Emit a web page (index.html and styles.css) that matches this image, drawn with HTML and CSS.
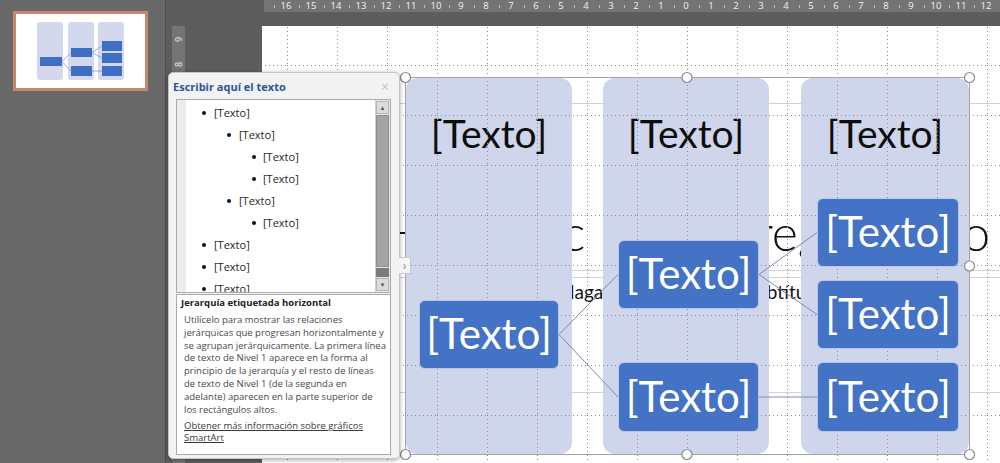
FILE: index.html
```html
<!DOCTYPE html>
<html lang="es">
<head>
<meta charset="utf-8">
<title>SmartArt</title>
<link rel="stylesheet" href="styles.css">
</head>
<body>
<div class="app">
  <aside class="thumbs">
    <div class="thumb">
      <svg class="thumb-art" width="129" height="74" viewBox="0 0 129 74">
        <g fill="#d3d8ec">
          <rect x="21" y="8" width="26" height="58" rx="3"/>
          <rect x="52" y="8" width="26" height="58" rx="3"/>
          <rect x="82" y="8" width="26" height="58" rx="3"/>
        </g>
        <path d="M46 47.5 L55 38.5 M46 47.5 L55 57 M76 38.5 L86 32 M76 38.5 L86 44 M76 57 L86 57" stroke="#8596bb" stroke-width="0.8" fill="none"/>
        <g fill="#3f6fc4">
          <rect x="24" y="43" width="22" height="9"/>
          <rect x="55" y="34" width="21" height="9"/>
          <rect x="55" y="52" width="21" height="10"/>
          <rect x="86" y="27" width="20" height="10"/>
          <rect x="86" y="39" width="20" height="10"/>
          <rect x="86" y="52" width="20" height="10"/>
        </g>
      </svg>
    </div>
  </aside>

  <div class="workspace">
    <div class="hruler">
      <span>16</span><span>15</span><span>14</span><span>13</span><span>12</span><span>11</span><span>10</span><span>9</span><span>8</span><span>7</span><span>6</span><span>5</span><span>4</span><span>3</span><span>2</span><span>1</span><span>0</span><span>1</span><span>2</span><span>3</span><span>4</span><span>5</span><span>6</span><span>7</span><span>8</span><span>9</span><span>10</span><span>11</span><span>12</span>
    </div>
    <div class="vruler">
      <span>9</span><span>8</span><span>7</span><span>6</span><span>5</span>
    </div>
    <div class="slide">
      <div class="ph ph-title"><span>Haga clic para agregar título</span></div>
      <div class="ph ph-sub"><span>Haga clic para agregar subtítulo</span></div>

      <svg class="grid" width="100%" height="100%">
        <defs>
          <pattern id="g" width="50" height="50" patternUnits="userSpaceOnUse" x="25" y="39">
            <line x1="0" y1="0.5" x2="50" y2="0.5" stroke="#8a8a8a" stroke-width="1" stroke-dasharray="1 3"/>
            <line x1="0.5" y1="0" x2="0.5" y2="50" stroke="#8a8a8a" stroke-width="1" stroke-dasharray="1 3"/>
          </pattern>
        </defs>
        <rect width="100%" height="100%" fill="url(#g)"/>
      </svg>

      <div class="smartart">
        <div class="col col-1"><span>[Texto]</span></div>
        <div class="col col-2"><span>[Texto]</span></div>
        <div class="col col-3"><span>[Texto]</span></div>

        <div class="node node-a">[Texto]</div>
        <div class="node node-b">[Texto]</div>
        <div class="node node-c">[Texto]</div>
        <div class="node node-d">[Texto]</div>
        <div class="node node-e">[Texto]</div>
        <div class="node node-f">[Texto]</div>

        <svg class="frame" width="565" height="378" viewBox="0 0 565 378">
          <path class="links" d="M154 257.5 L213 197.5 M154 257.5 L213 320 M354 197.5 L412 155.5 M354 197.5 L412 237.5 M354 320 L412 320"/>
          <rect x="0.5" y="0.5" width="564" height="377" fill="none" stroke="#a3a3a3"/>
          <g class="handles">
            <circle cx="0.5" cy="0.5" r="5"/>
            <circle cx="282" cy="0.5" r="5"/>
            <circle cx="564.5" cy="0.5" r="5"/>
            <circle cx="564.5" cy="189" r="5"/>
            <circle cx="564.5" cy="377.5" r="5"/>
            <circle cx="282" cy="377.5" r="5"/>
            <circle cx="0.5" cy="377.5" r="5"/>
            <circle cx="0.5" cy="189" r="5"/>
          </g>
        </svg>
      </div>
    </div>
  </div>

  <section class="textpane">
    <header class="pane-head">
      <h1 class="pane-title">Escribir aquí el texto</h1>
      <span class="pane-close">×</span>
    </header>
    <div class="listbox">
      <div class="strip"></div>
      <ul class="items">
        <li class="l1">[Texto]</li>
        <li class="l2">[Texto]</li>
        <li class="l3">[Texto]</li>
        <li class="l3">[Texto]</li>
        <li class="l2">[Texto]</li>
        <li class="l3">[Texto]</li>
        <li class="l1">[Texto]</li>
        <li class="l1">[Texto]</li>
        <li class="l1">[Texto]</li>
      </ul>
      <div class="scroll">
        <div class="sbtn">▲</div>
        <div class="sthumb"></div>
        <div class="strack"></div>
        <div class="sbtn">▼</div>
      </div>
    </div>
    <div class="desc">
      <h2 class="desc-title">Jerarquía etiquetada horizontal</h2>
      <p class="desc-body">Utilícelo para mostrar las relaciones<br>jerárquicas que progresan horizontalmente y<br>se agrupan jerárquicamente. La primera línea<br>de texto de Nivel 1 aparece en la forma al<br>principio de la jerarquía y el resto de líneas<br>de texto de Nivel 1 (de la segunda en<br>adelante) aparecen en la parte superior de<br>los rectángulos altos.</p>
      <p class="desc-link"><a>Obtener más información sobre gráficos<br>SmartArt</a></p>
    </div>
  </section>
  <div class="pane-tab">›</div>
</div>
</body>
</html>
```

FILE: styles.css
```css
html, body {
  margin: 0;
  padding: 0;
  width: 1000px;
  height: 463px;
  overflow: hidden;
  background: #5e5e5e;
}

.app {
  position: relative;
  display: flex;
  width: 1000px;
  height: 463px;
  font-family: "Open Sans", "Noto Sans", sans-serif;
}

/* thumbnails pane */
.thumbs {
  width: 166px;
  flex: none;
  background: #686868;
  border-right: 1px solid #4e4e4e;
  padding: 11px 0 0 13px;
  box-sizing: border-box;
}

.thumb {
  width: 135px;
  height: 80px;
  box-sizing: border-box;
  border: 3px solid #c9866f;
  background: #fff;
}

.thumb-art {
  display: block;
}

/* workspace */
.workspace {
  flex: 1;
  display: grid;
  grid-template-columns: 96px 1fr;
  grid-template-rows: 12px 14px 1fr;
  background: #5d5d5d;
  min-width: 0;
}

.hruler {
  grid-column: 2;
  grid-row: 1;
  margin-left: 2px;
  padding-left: 9.5px;
  background: #747474;
  display: flex;
  overflow: hidden;
}

.hruler span {
  position: relative;
  flex: none;
  width: 25px;
  text-align: center;
  font-size: 9.5px;
  line-height: 12px;
  color: #f2f2f2;
}

.hruler span::before {
  content: "";
  position: absolute;
  left: 0;
  top: 5px;
  width: 1px;
  height: 3px;
  background: #bdbdbd;
}

.vruler {
  grid-column: 1;
  grid-row: 3;
  width: 13px;
  margin-left: 6px;
  background: #747474;
  display: flex;
  flex-direction: column;
  padding-top: 1px;
  box-sizing: border-box;
}

.vruler span {
  height: 25px;
  display: flex;
  align-items: center;
  justify-content: center;
  font-size: 9px;
  color: #eeeeee;
  transform: rotate(-90deg);
}

.slide {
  grid-column: 2;
  grid-row: 3;
  position: relative;
  overflow: hidden;
  background: #ffffff;
}

/* placeholders behind SmartArt */
.ph {
  position: absolute;
  left: 64px;
  width: 730px;
  box-sizing: border-box;
  border: 1px solid #d2d2d2;
  display: flex;
  justify-content: center;
  font-family: "Lato", "Open Sans", sans-serif;
  color: #111;
  white-space: nowrap;
}

.ph-title {
  top: 77px;
  height: 168px;
  align-items: flex-end;
  padding-bottom: 13px;
  font-size: 50px;
  font-weight: 300;
  line-height: 1;
}

.ph-sub {
  top: 251px;
  height: 116px;
  align-items: flex-start;
  padding-top: 4px;
  font-size: 19px;
  line-height: 1;
}

.grid {
  position: absolute;
  left: 0;
  top: 0;
  z-index: 2;
  pointer-events: none;
}

/* SmartArt */
.smartart {
  position: absolute;
  left: 143px;
  top: 51px;
  width: 565px;
  height: 378px;
}

.col {
  position: absolute;
  top: 1px;
  height: 376px;
  z-index: 1;
  background: #cfd5ea;
  border-radius: 12px;
  display: flex;
  justify-content: center;
  padding-top: 36px;
  box-sizing: border-box;
  font-family: "Lato", "Open Sans", sans-serif;
  font-size: 39px;
  line-height: 38px;
  color: #0d0d0d;
}

.col-1 { left: 1px; width: 166px; }
.col-2 { left: 198px; width: 166px; }
.col-3 { left: 396px; width: 168px; }

.node {
  position: absolute;
  z-index: 3;
  box-sizing: border-box;
  background: #4472c4;
  border: 1px solid #b7c8ea;
  border-radius: 6px;
  display: flex;
  align-items: center;
  justify-content: center;
  font-family: "Lato", "Open Sans", sans-serif;
  font-size: 42px;
  line-height: 1;
  color: #ffffff;
  padding-bottom: 3px;
}

.node-a { left: 14px;  top: 223px; width: 140px; height: 69px; }
.node-b { left: 213px; top: 163px; width: 141px; height: 69px; }
.node-c { left: 213px; top: 285px; width: 141px; height: 70px; }
.node-d { left: 412px; top: 121px; width: 142px; height: 69px; }
.node-e { left: 412px; top: 203px; width: 142px; height: 69px; }
.node-f { left: 412px; top: 285px; width: 142px; height: 70px; }

.frame {
  position: absolute;
  left: 0;
  top: 0;
  z-index: 4;
  overflow: visible;
}

.links {
  stroke: #7d8aab;
  stroke-width: 1;
  fill: none;
}

.handles circle {
  fill: #ffffff;
  stroke: #8c8c8c;
  stroke-width: 1.2;
}

/* text pane */
.textpane {
  position: absolute;
  left: 168px;
  top: 72px;
  width: 232px;
  height: 387px;
  box-sizing: border-box;
  background: #f2f2f2;
  border: 1px solid #c4c4c4;
  border-radius: 5px;
  box-shadow: 0 1px 4px rgba(0, 0, 0, 0.35);
  padding: 0 8px 3px 7px;
  display: flex;
  flex-direction: column;
  z-index: 10;
}

.pane-head {
  height: 26px;
  flex: none;
  display: flex;
  align-items: center;
  justify-content: space-between;
  margin-left: -3px;
}

.pane-title {
  margin: 0;
  font-size: 11px;
  font-weight: 700;
  color: #2b5797;
}

.pane-close {
  font-size: 14px;
  color: #c4c4c4;
  margin-right: 2px;
}

.listbox {
  height: 194px;
  flex: none;
  box-sizing: border-box;
  border: 1px solid #ababab;
  background: #ffffff;
  display: flex;
  overflow: hidden;
}

.strip {
  width: 9px;
  flex: none;
  background: #ececec;
}

.items {
  flex: 1;
  margin: 0;
  padding: 2px 0 0 0;
  list-style: none;
  overflow: hidden;
}

.items li {
  position: relative;
  height: 22px;
  line-height: 22px;
  font-size: 11px;
  color: #1e1e1e;
  white-space: nowrap;
}

.items li::before {
  content: "";
  position: absolute;
  top: 9px;
  width: 4px;
  height: 4px;
  border-radius: 50%;
  background: #111;
}

.items .l1 { padding-left: 28px; }
.items .l2 { padding-left: 53px; }
.items .l3 { padding-left: 77px; }
.items .l1::before { left: 16px; }
.items .l2::before { left: 41px; }
.items .l3::before { left: 66px; }

.scroll {
  width: 15px;
  flex: none;
  display: flex;
  flex-direction: column;
  background: #e6e6e6;
  border-left: 1px solid #cfcfcf;
  padding: 1px 1px 1px 0;
  box-sizing: border-box;
}

.sbtn {
  height: 13px;
  flex: none;
  display: flex;
  align-items: center;
  justify-content: center;
  font-size: 6px;
  color: #555;
  background: #dcdcdc;
  border: 1px solid #b5b5b5;
  box-sizing: border-box;
}

.sthumb {
  flex: 1;
  background: #a3a3a3;
  border: 1px solid #8e8e8e;
  margin: 1px 0;
}

.strack {
  height: 9px;
  flex: none;
  background: #7b7b7b;
  margin-bottom: 1px;
}

.desc {
  margin-top: 1px;
  flex: 1;
  box-sizing: border-box;
  border: 1px solid #ababab;
  background: #ffffff;
  padding: 0 4px 0 4px;
}

.desc-title {
  margin: 0;
  font-size: 9.5px;
  font-weight: 700;
  line-height: 16px;
  color: #222;
  white-space: nowrap;
}

.desc-body {
  margin: 3px 0 0 3px;
  font-size: 9.5px;
  line-height: 12.8px;
  color: #484848;
  white-space: nowrap;
}

.desc-link {
  margin: 4px 0 0 3px;
  font-size: 9.5px;
  line-height: 11.5px;
  white-space: nowrap;
}

.desc-link a {
  color: #3a3a3a;
  text-decoration: underline;
}

.pane-tab {
  position: absolute;
  left: 399px;
  top: 257px;
  width: 12px;
  height: 17px;
  box-sizing: border-box;
  background: #f4f4f4;
  border: 1px solid #c8c8c8;
  border-left: none;
  display: flex;
  align-items: center;
  justify-content: center;
  font-size: 12px;
  color: #8a8a8a;
  z-index: 11;
}
```
